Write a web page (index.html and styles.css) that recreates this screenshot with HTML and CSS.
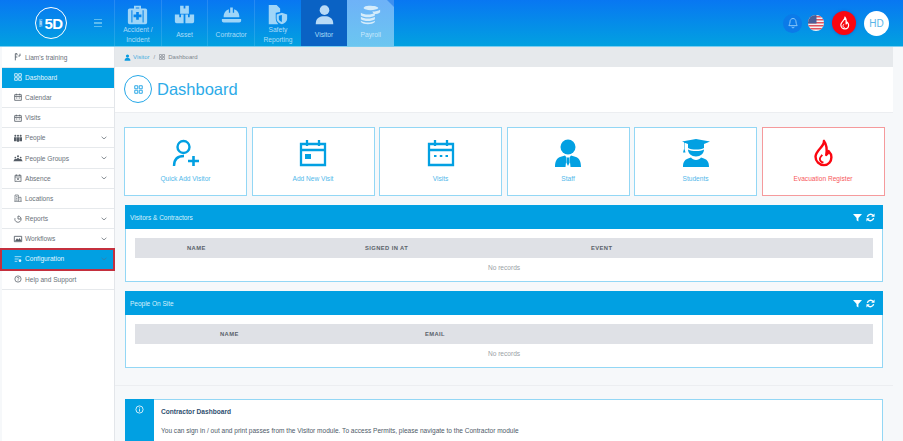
FILE: index.html
```html
<!DOCTYPE html>
<html lang="en">
<head>
<meta charset="utf-8">
<title>Dashboard</title>
<link rel="stylesheet" href="styles.css">
</head>
<body>
<svg class="defs" width="0" height="0" aria-hidden="true">
  <symbol id="grid" viewBox="0 0 12 12"><path d="M1 1h4v4H1zM7 1h4v4H7zM1 7h4v4H1zM7 7h4v4H7z" fill="none" stroke="currentColor" stroke-width="1.300"/></symbol>
  <symbol id="cal" viewBox="0 0 12 12"><path d="M1 2.500h10v8.500H1zM1 5.200h10M3.500 1v2.500M8.500 1v2.500M3 7.500h2M7 7.500h2" fill="none" stroke="currentColor" stroke-width="1.200"/></symbol>
  <symbol id="chev" viewBox="0 0 10 6"><path d="M1 1l4 3.500L9 1" fill="none" stroke="currentColor" stroke-width="1.300"/></symbol>
  <symbol id="person" viewBox="0 0 24 24"><circle cx="12" cy="7" r="5.500" fill="currentColor"/><path d="M2 23c0-7 4-9 10-9s10 2 10 9z" fill="currentColor"/></symbol>
  <symbol id="flame" viewBox="0 0 24 30"><path d="M13 2c1 6-9 10-9 17 0 5 4 9 9 9 5 0 8-4 8-8.500 0-3-1.500-5-3-6.500-.3 2-1 3.300-2.500 4C16.500 11 16 6 13 2z" fill="none" stroke="currentColor" stroke-width="2.600" stroke-linejoin="round"/><path d="M12.500 25c-2.500 0-4.200-2-3.800-4.200.3-1.500 1.500-2.500 2.500-3.800" fill="none" stroke="currentColor" stroke-width="2"/></symbol>
</svg>

<header class="topbar">
  <div class="brand">
    <div class="logo"><span class="logo-small">SAAS</span><span class="logo-main">5D</span></div>
    <div class="burger"><i></i><i></i><i></i></div>
  </div>
  <nav class="modules">
    <a class="module"><svg class="mod-icon" viewBox="0 0 24 24"><path d="M8 5V2h8v3h5a2 2 0 0 1 2 2v14a2 2 0 0 1-2 2H3a2 2 0 0 1-2-2V7a2 2 0 0 1 2-2zm2-1v1h4V4zM10.500 9v3h-3v3h3v3h3v-3h3v-3h-3V9zM5 7v14h1.200V7zM17.800 7v14H19V7z" fill="currentColor" fill-rule="evenodd"/></svg><span>Accident / Incident</span></a>
    <a class="module"><svg class="mod-icon" viewBox="0 0 24 24"><path d="M7 2h4v3h2V2h4v9H7zM1 12h5v3h2v-3h3v10H3a2 2 0 0 1-2-2zM13 12h3v3h2v-3h5v8a2 2 0 0 1-2 2h-8z" fill="currentColor"/></svg><span>Asset</span></a>
    <a class="module"><svg class="mod-icon" viewBox="0 0 24 24"><path d="M3 15c0-5 2.500-8 6-9V10h1.500V4h3v6H15V6c3.500 1 6 4 6 9zM1 17h22v2.500c0 1-1 1.500-2 1.500H3c-1 0-2-.5-2-1.500z" fill="currentColor"/></svg><span>Contractor</span></a>
    <a class="module"><svg class="mod-icon" viewBox="0 0 24 24"><path d="M2 1h9l4 4v4c-3 0-4 1-5 1v6c0 3 1 5 3 7H2z" fill="currentColor"/><path d="M17 10l6 2v5c0 3-3 5-6 6-3-1-6-3-6-6v-5zm0 2.500l-3.500 1V17c0 1.500 2 3 3.500 3.500z" fill="currentColor" fill-rule="evenodd"/></svg><span>Safety Reporting</span></a>
    <a class="module is-dark"><svg class="mod-icon mod-person"><use href="#person"/></svg><span>Visitor</span></a>
    <a class="module is-light"><svg class="mod-icon" viewBox="0 0 24 24"><path d="M10 2c7 0 10 1 11 2.500C20 6 16 7 12 7S5 6 4 4.500C5 3 7 2 10 2zM14 8.500c4 0 7-.5 9-2v3c-1 1.500-4 2-7 2.300zM1 10c1.500 1.500 5 2 8 2s6.500-.5 8-2v3c-1.500 1.500-5 2-8 2s-6.500-.5-8-2zM1 14.500c1.500 1.500 5 2 8 2s6.500-.5 8-2v3c-1.500 1.500-5 2-8 2s-6.500-.5-8-2zM1 19c1.500 1.500 5 2 8 2s6.500-.5 8-2v1.500c-1.500 2-5 2.500-8 2.500s-6.500-.5-8-2.500z" fill="currentColor"/></svg><span>Payroll</span><b class="corner"></b></a>
  </nav>
  <div class="top-actions">
    <span class="bell"><svg viewBox="0 0 16 16"><path d="M8 2c-2.500 0-4 2-4 4.500 0 3-1.500 4-1.500 5h11c0-1-1.500-2-1.500-5C12 4 10.500 2 8 2zM6.500 13a1.500 1.500 0 0 0 3 0" fill="none" stroke="currentColor" stroke-width="1.300"/></svg></span>
    <span class="flag"><svg viewBox="0 0 16 16"><defs><clipPath id="round"><circle cx="8" cy="8" r="8"/></clipPath></defs><g clip-path="url(#round)"><rect width="16" height="16" fill="#f4f4f4"/><path d="M0 1h16v1.500H0zM0 4h16v1.500H0zM0 7h16v1.500H0zM0 10h16v1.500H0zM0 13h16v1.500H0z" fill="#e2545f"/><rect width="8.500" height="8.500" fill="#4a5f98"/></g></svg></span>
    <span class="fire"><svg><use href="#flame"/></svg></span>
    <span class="avatar">HD</span>
  </div>
</header>

<div class="shell">
  <aside class="sidebar">
    <a class="side-item"><svg class="side-icon" viewBox="0 0 12 12"><path d="M2 1v10M2 1h2.500M2 6h3M9 1v3.500H6.500M4.500 1v2.500" fill="none" stroke="currentColor" stroke-width="1.300"/></svg><span>Liam's training</span></a>
    <a class="side-item is-active"><svg class="side-icon"><use href="#grid"/></svg><span>Dashboard</span></a>
    <a class="side-item"><svg class="side-icon"><use href="#cal"/></svg><span>Calendar</span></a>
    <a class="side-item"><svg class="side-icon"><use href="#cal"/></svg><span>Visits</span></a>
    <a class="side-item"><svg class="side-icon side-wide" viewBox="0 0 14 12"><path d="M3 1a1.500 1.500 0 1 1 0 3 1.500 1.500 0 0 1 0-3zM7 1a1.500 1.500 0 1 1 0 3 1.500 1.500 0 0 1 0-3zM11 1a1.500 1.500 0 1 1 0 3 1.500 1.500 0 0 1 0-3zM1 5h4v6H1zM5.500 5h3v6.500h-3zM9 5h4v6H9z" fill="currentColor"/></svg><span>People</span><svg class="chev"><use href="#chev"/></svg></a>
    <a class="side-item"><svg class="side-icon side-wide" viewBox="0 0 14 12"><path d="M7 2a1.500 1.500 0 1 1 0 3 1.500 1.500 0 0 1 0-3zM3 4a1.300 1.300 0 1 1 0 2.600A1.300 1.300 0 0 1 3 4zM11 4a1.300 1.300 0 1 1 0 2.600A1.300 1.300 0 0 1 11 4zM0 11l2-3.500h2.500L7 5.500l2.500 2H12l2 3.500z" fill="currentColor"/></svg><span>People Groups</span><svg class="chev"><use href="#chev"/></svg></a>
    <a class="side-item"><svg class="side-icon" viewBox="0 0 12 12"><path d="M1.500 2h9v9.500h-9zM1.500 4.500h9M3.500.5V3M8.500.5V3M4.300 6l3.400 3.500M7.700 6L4.300 9.500" fill="none" stroke="currentColor" stroke-width="1.100"/></svg><span>Absence</span><svg class="chev"><use href="#chev"/></svg></a>
    <a class="side-item"><svg class="side-icon" viewBox="0 0 12 12"><path d="M1.500 11V1.500h5V11M6.500 5h4v6M.5 11h11M3 4h2M3 6.500h2M3 9h2M8 7.500h1" fill="none" stroke="currentColor" stroke-width="1"/></svg><span>Locations</span></a>
    <a class="side-item"><svg class="side-icon" viewBox="0 0 12 12"><path d="M6 1.500a4.700 4.700 0 1 1-4.500 3.300M6 1.500V6h4.500" fill="none" stroke="currentColor" stroke-width="1.200"/></svg><span>Reports</span><svg class="chev"><use href="#chev"/></svg></a>
    <a class="side-item"><svg class="side-icon side-wide" viewBox="0 0 14 12"><path d="M1.500 2h11v8h-11z" fill="none" stroke="currentColor" stroke-width="1.300"/><path d="M2.500 9l3-4 2 2 2-2.500 2.500 4.500z" fill="currentColor"/></svg><span>Workflows</span><svg class="chev"><use href="#chev"/></svg></a>
    <a class="side-item is-active is-marked"><svg class="side-icon" viewBox="0 0 12 12"><path d="M1 2.500h10M1 6h6M1 9.500h4" fill="none" stroke="currentColor" stroke-width="1.100"/><circle cx="9" cy="8.500" r="2" fill="currentColor"/></svg><span>Configuration</span><svg class="chev"><use href="#chev"/></svg></a>
    <a class="side-item"><svg class="side-icon" viewBox="0 0 12 12"><circle cx="6" cy="6" r="4.700" fill="none" stroke="currentColor" stroke-width="1.100"/><path d="M4.500 4.800C4.500 3 7.500 3 7.500 4.800c0 1.200-1.500 1.200-1.500 2.400M6 8.200v1" fill="none" stroke="currentColor" stroke-width="1"/></svg><span>Help and Support</span></a>
  </aside>

  <main class="content">
    <div class="crumbs">
      <svg class="crumb-icon"><use href="#person"/></svg><a class="crumb-link">Visitor</a>
      <span class="crumb-sep">/</span>
      <svg class="crumb-grid"><use href="#grid"/></svg><span class="crumb-now">Dashboard</span>
    </div>
    <div class="page-title">
      <span class="title-badge"><svg><use href="#grid"/></svg></span>
      <h1>Dashboard</h1>
    </div>

    <section class="tiles">
      <a class="tile">
        <svg class="tile-icon" viewBox="0 0 28 28"><circle cx="11.500" cy="8" r="6" fill="none" stroke="currentColor" stroke-width="2.400"/><path d="M2 27c0-7 4-10 10-10" fill="none" stroke="currentColor" stroke-width="2.400"/><path d="M16 22h11M21.500 17v10" fill="none" stroke="currentColor" stroke-width="2.600"/></svg>
        <span>Quick Add Visitor</span>
      </a>
      <a class="tile">
        <svg class="tile-icon" viewBox="0 0 28 28"><path d="M2 5h24v21H2zM2 11h24M8 1v6M20 1v6" fill="none" stroke="currentColor" stroke-width="2.300"/><rect x="6" y="15" width="6" height="5" fill="currentColor"/></svg>
        <span>Add New Visit</span>
      </a>
      <a class="tile">
        <svg class="tile-icon" viewBox="0 0 28 28"><path d="M2 5h24v21H2zM2 11h24M8 1v6M20 1v6" fill="none" stroke="currentColor" stroke-width="2.300"/><path d="M7 17h2.500M12.800 17h2.500M18.500 17H21" stroke="currentColor" stroke-width="2.200"/></svg>
        <span>Visits</span>
      </a>
      <a class="tile">
        <svg class="tile-icon" viewBox="0 0 28 28"><circle cx="14" cy="8" r="7.500" fill="currentColor"/><path d="M1 28c0-6 2-9 5-10l5-1.500 1.500 2-1 9.500zM27 28c0-6-2-9-5-10l-5-1.500-1.500 2 1 9.500zM13 18.500h2l.7 5L14 27l-1.700-3.500z" fill="currentColor"/></svg>
        <span>Staff</span>
      </a>
      <a class="tile">
        <svg class="tile-icon" viewBox="0 0 28 28"><path d="M14 0l14 2.500-6 2.500v4c-2 1-5 1.500-8 1.500S8 10 6 9V5L2.500 3.800V10l1 3.500H1L2 10V3.300L0 2.500z" fill="currentColor"/><path d="M6 10.500c0 4 3.500 7 8 7s8-3 8-7c-2 1-5 1.500-8 1.500s-6-.5-8-1.500z" fill="currentColor"/><path d="M1 28c0-5 1.500-8 8-9.500 1 1.500 3 2.500 5 2.500s4-1 5-2.500c6.500 1.500 8 4.500 8 9.500z" fill="currentColor"/></svg>
        <span>Students</span>
      </a>
      <a class="tile is-danger">
        <svg class="tile-icon"><use href="#flame"/></svg>
        <span>Evacuation Register</span>
      </a>
    </section>

    <section class="panel">
      <header class="panel-head">
        <span>Visitors &amp; Contractors</span>
        <span class="panel-tools">
          <svg viewBox="0 0 10 10"><path d="M0 1h10L6 5.500V9.500L4 8V5.500z" fill="currentColor"/></svg>
          <svg viewBox="0 0 10 10"><path d="M1.500 4.200A3.600 3.600 0 0 1 8 3M8.500 5.800A3.600 3.600 0 0 1 2 7" fill="none" stroke="currentColor" stroke-width="1.500"/><path d="M9.500 .5v3.700H5.800zM.5 9.500V5.800h3.700z" fill="currentColor"/></svg>
        </span>
      </header>
      <div class="panel-body">
        <div class="thead thead-three"><span>NAME</span><span>SIGNED IN AT</span><span>EVENT</span></div>
        <p class="empty">No records</p>
      </div>
    </section>

    <section class="panel">
      <header class="panel-head">
        <span>People On Site</span>
        <span class="panel-tools">
          <svg viewBox="0 0 10 10"><path d="M0 1h10L6 5.500V9.500L4 8V5.500z" fill="currentColor"/></svg>
          <svg viewBox="0 0 10 10"><path d="M1.500 4.200A3.600 3.600 0 0 1 8 3M8.500 5.800A3.600 3.600 0 0 1 2 7" fill="none" stroke="currentColor" stroke-width="1.500"/><path d="M9.500 .5v3.700H5.800zM.5 9.500V5.800h3.700z" fill="currentColor"/></svg>
        </span>
      </header>
      <div class="panel-body">
        <div class="thead thead-two"><span>NAME</span><span>EMAIL</span></div>
        <p class="empty">No records</p>
      </div>
    </section>

    <hr class="rule">

    <section class="notice">
      <div class="notice-side"><svg viewBox="0 0 12 12"><circle cx="6" cy="6" r="4.800" fill="none" stroke="currentColor" stroke-width="1.200"/><path d="M6 3.200v1.300M6 5.500v3.300" stroke="currentColor" stroke-width="1.200"/></svg></div>
      <div class="notice-body">
        <h2>Contractor Dashboard</h2>
        <p>You can sign in / out and print passes from the Visitor module. To access Permits, please navigate to the Contractor module</p>
      </div>
    </section>
  </main>
</div>
</body>
</html>
```

FILE: styles.css
```css
* { box-sizing: border-box; }
html, body { margin: 0; height: 441px; overflow: hidden; }
body {
  font-family: "Liberation Sans", Arial, sans-serif;
  font-size: 6.600px;
  background: #f6f8fa;
  color: #5d6670;
}
a { text-decoration: none; color: inherit; }
.defs { position: absolute; }

.topbar {
  height: 47px;
  display: flex;
  background: linear-gradient(180deg, #0877f2 0%, #02a1e0 100%);
  border-bottom: 1px solid #7ccdf0;
  color: #fff;
}
.brand { width: 114px; display: flex; align-items: center; padding-left: 35px; }
.logo {
  width: 32px; height: 32px;
  border: 1.500px solid #fff; border-radius: 50%;
  display: flex; align-items: center; justify-content: center; gap: 1px;
}
.logo-small { font-size: 3px; writing-mode: vertical-rl; transform: rotate(180deg); }
.logo-main { font-size: 15px; font-weight: 700; letter-spacing: -.5px; }
.burger { margin-left: 27px; width: 8px; display: flex; flex-direction: column; gap: 2px; }
.burger i { height: 1.500px; background: #5dbcf0; }

.modules { display: flex; }
.module {
  width: 46.700px;
  display: flex; flex-direction: column; align-items: center;
  padding-top: 4px;
  border-left: 1px solid rgba(255,255,255,.12);
  color: #a9dcf8;
  text-align: center;
  font-size: 6.700px;
  line-height: 10px;
  position: relative;
}
.module span { display: flex; flex: 1; align-items: center; padding: 0 4px 2px; }
.mod-icon { width: 21px; height: 21px; flex: none; color: #9fd5f8; }
.module.is-dark { background: #0a62c4; border-left: 0; }
.mod-person { color: #b8daf6; }
.module.is-light { background: linear-gradient(180deg, #6eb2f8 0%, #6bc6f0 100%); color: #c8e8fb; border-left: 0; }
.module.is-light .mod-icon { color: #d5ecfb; }
.corner {
  position: absolute; top: 0; right: 0;
  border-style: solid; border-width: 0 7px 7px 0;
  border-color: transparent #3d8ff0 transparent transparent;
}

.top-actions { margin-left: auto; display: flex; align-items: center; padding-right: 14px; height: 46px; }
.bell {
  width: 19px; height: 19px; border-radius: 50%;
  background: #0b7ae8; color: #8fc8f8;
  display: flex; align-items: center; justify-content: center;
}
.bell svg { width: 12px; height: 12px; }
.flag { width: 16px; height: 16px; margin-left: 6px; display: flex; }
.flag svg { width: 16px; height: 16px; }
.fire {
  width: 24px; height: 24px; border-radius: 50%;
  margin-left: 8px;
  background: #fb0610; color: #fff;
  box-shadow: 0 0 3px #0a5fd8;
  display: flex; align-items: center; justify-content: center;
}
.fire svg { width: 11px; height: 14px; }
.avatar {
  width: 25px; height: 25px; border-radius: 50%;
  margin-left: 8px;
  background: #fff; color: #5ab5e8;
  display: flex; align-items: center; justify-content: center;
  font-size: 10px;
}

.shell { display: flex; height: 394px; }
.sidebar {
  width: 115px;
  padding: .5px 0 0 2px;
  flex: none;
  border-right: 1px solid #e3e6ea;
  background: linear-gradient(90deg, #f6f8fa 2px, #fff 2px);
}
.side-item {
  height: 20.200px;
  display: flex; align-items: center;
  padding: 0 6px 0 12px;
  border-bottom: 1px solid #e6e9ec;
  color: #6a727a;
  font-size: 6.600px;
}
.side-icon { width: 8px; height: 8px; flex: none; margin-right: 3px; color: #555d66; }
.side-wide { width: 10px; margin-left: -1px; margin-right: 2px; }
.chev { width: 6px; height: 4px; margin-left: auto; margin-right: 1px; color: #6a727a; }
.side-item.is-active { background: #01a0e2; color: #e4f5fd; border-bottom-color: #01a0e2; }
.is-active .side-icon { color: #dff2fc; }
.is-active .chev { color: #3a7ea8; }
.is-marked {
  position: relative;
  outline: 2px solid #c4303e;
  outline-offset: -1px;
  margin-left: -1px;
  padding-left: 13px;
}

.content { flex: 1; min-width: 0; padding-right: 10px; }
.crumbs {
  height: 20px;
  background: #e6e9ec;
  display: flex; align-items: center;
  padding-left: 9px;
  font-size: 6px;
}
.crumb-icon { width: 7px; height: 7px; color: #0a9be0; margin-right: 2px; }
.crumb-link { color: #4aaee0; }
.crumb-sep { margin: 0 4px; color: #8a9098; }
.crumb-grid { width: 6px; height: 6px; color: #80868e; margin-right: 3px; }
.crumb-now { color: #80868e; }

.page-title {
  height: 46px;
  background: #fff;
  border-bottom: 1px solid #eceef1;
  display: flex; align-items: center;
  padding: 0 0 1px 9px;
}
.title-badge {
  width: 28px; height: 28px;
  border: 1px solid #26a8e8; border-radius: 50%;
  display: flex; align-items: center; justify-content: center;
  color: #2aa8e6;
}
.title-badge svg { width: 9px; height: 9px; }
h1 { margin: 0 0 0 5px; font-size: 16.500px; font-weight: 400; color: #2dabe8; }

.tiles {
  display: grid;
  grid-template-columns: repeat(6, 123px);
  column-gap: 4.500px;
  padding: 14px 0 0 9px;
}
.tile {
  height: 69px;
  background: #fff;
  border: 1px solid #93d7f5;
  display: flex; flex-direction: column; align-items: center;
  padding-top: 11px;
  color: #52b8ea;
  font-size: 6.600px;
}
.tile span { margin-top: 8px; }
.tile-icon { width: 28px; height: 28px; color: #02a0e2; }
.tile.is-danger { border-color: #f59a9c; color: #f7585c; }
.is-danger .tile-icon { color: #fb0610; }

.panel {
  margin: 9px 10px 0 10px;
  height: 77px;
  background: #fff;
  border: 1px solid #93d7f5;
}
.panel-head {
  height: 24px;
  margin: -1px -1px 0;
  background: #01a0e2;
  display: flex; align-items: center; justify-content: space-between;
  padding: 0 8px 0 5px;
  color: #d8f1fc;
  font-size: 6.500px;
}
.panel-tools { display: flex; gap: 4px; color: #fff; }
.panel-tools svg { width: 9px; height: 9px; }
.panel-body { padding: 9px 9px 0; }
.thead {
  height: 20px;
  background: #dfe1e6;
  display: grid; align-items: center;
  font-size: 5.800px; font-weight: 700; letter-spacing: .4px;
  color: #5a616a;
}
.thead-three { padding-left: 52px; grid-template-columns: 178px 226px 1fr; }
.thead-two { padding-left: 85px; grid-template-columns: 205px 1fr; }
.empty { margin: 0; text-align: center; line-height: 19px; color: #9a9fa6; font-size: 6.600px; }

.rule { border: 0; border-top: 1px solid #eceef1; margin: 17px 0 13px; }

.notice {
  margin: 0 10px;
  height: 60px;
  display: flex;
  background: #fff;
  border: 1px solid #93d7f5;
}
.notice-side {
  width: 29px; flex: none;
  margin: -1px 0 -1px -1px;
  background: #01a0e2; color: #e4f5fd;
  display: flex; justify-content: center; padding-top: 6px;
}
.notice-side svg { width: 9px; height: 9px; }
.notice-body { padding: 8px 0 0 7px; }
h2 { margin: 0; font-size: 6.600px; font-weight: 700; color: #2f4f70; }
.notice-body p { margin: 12px 0 0; font-size: 6.560px; color: #4e5a68; }
```
